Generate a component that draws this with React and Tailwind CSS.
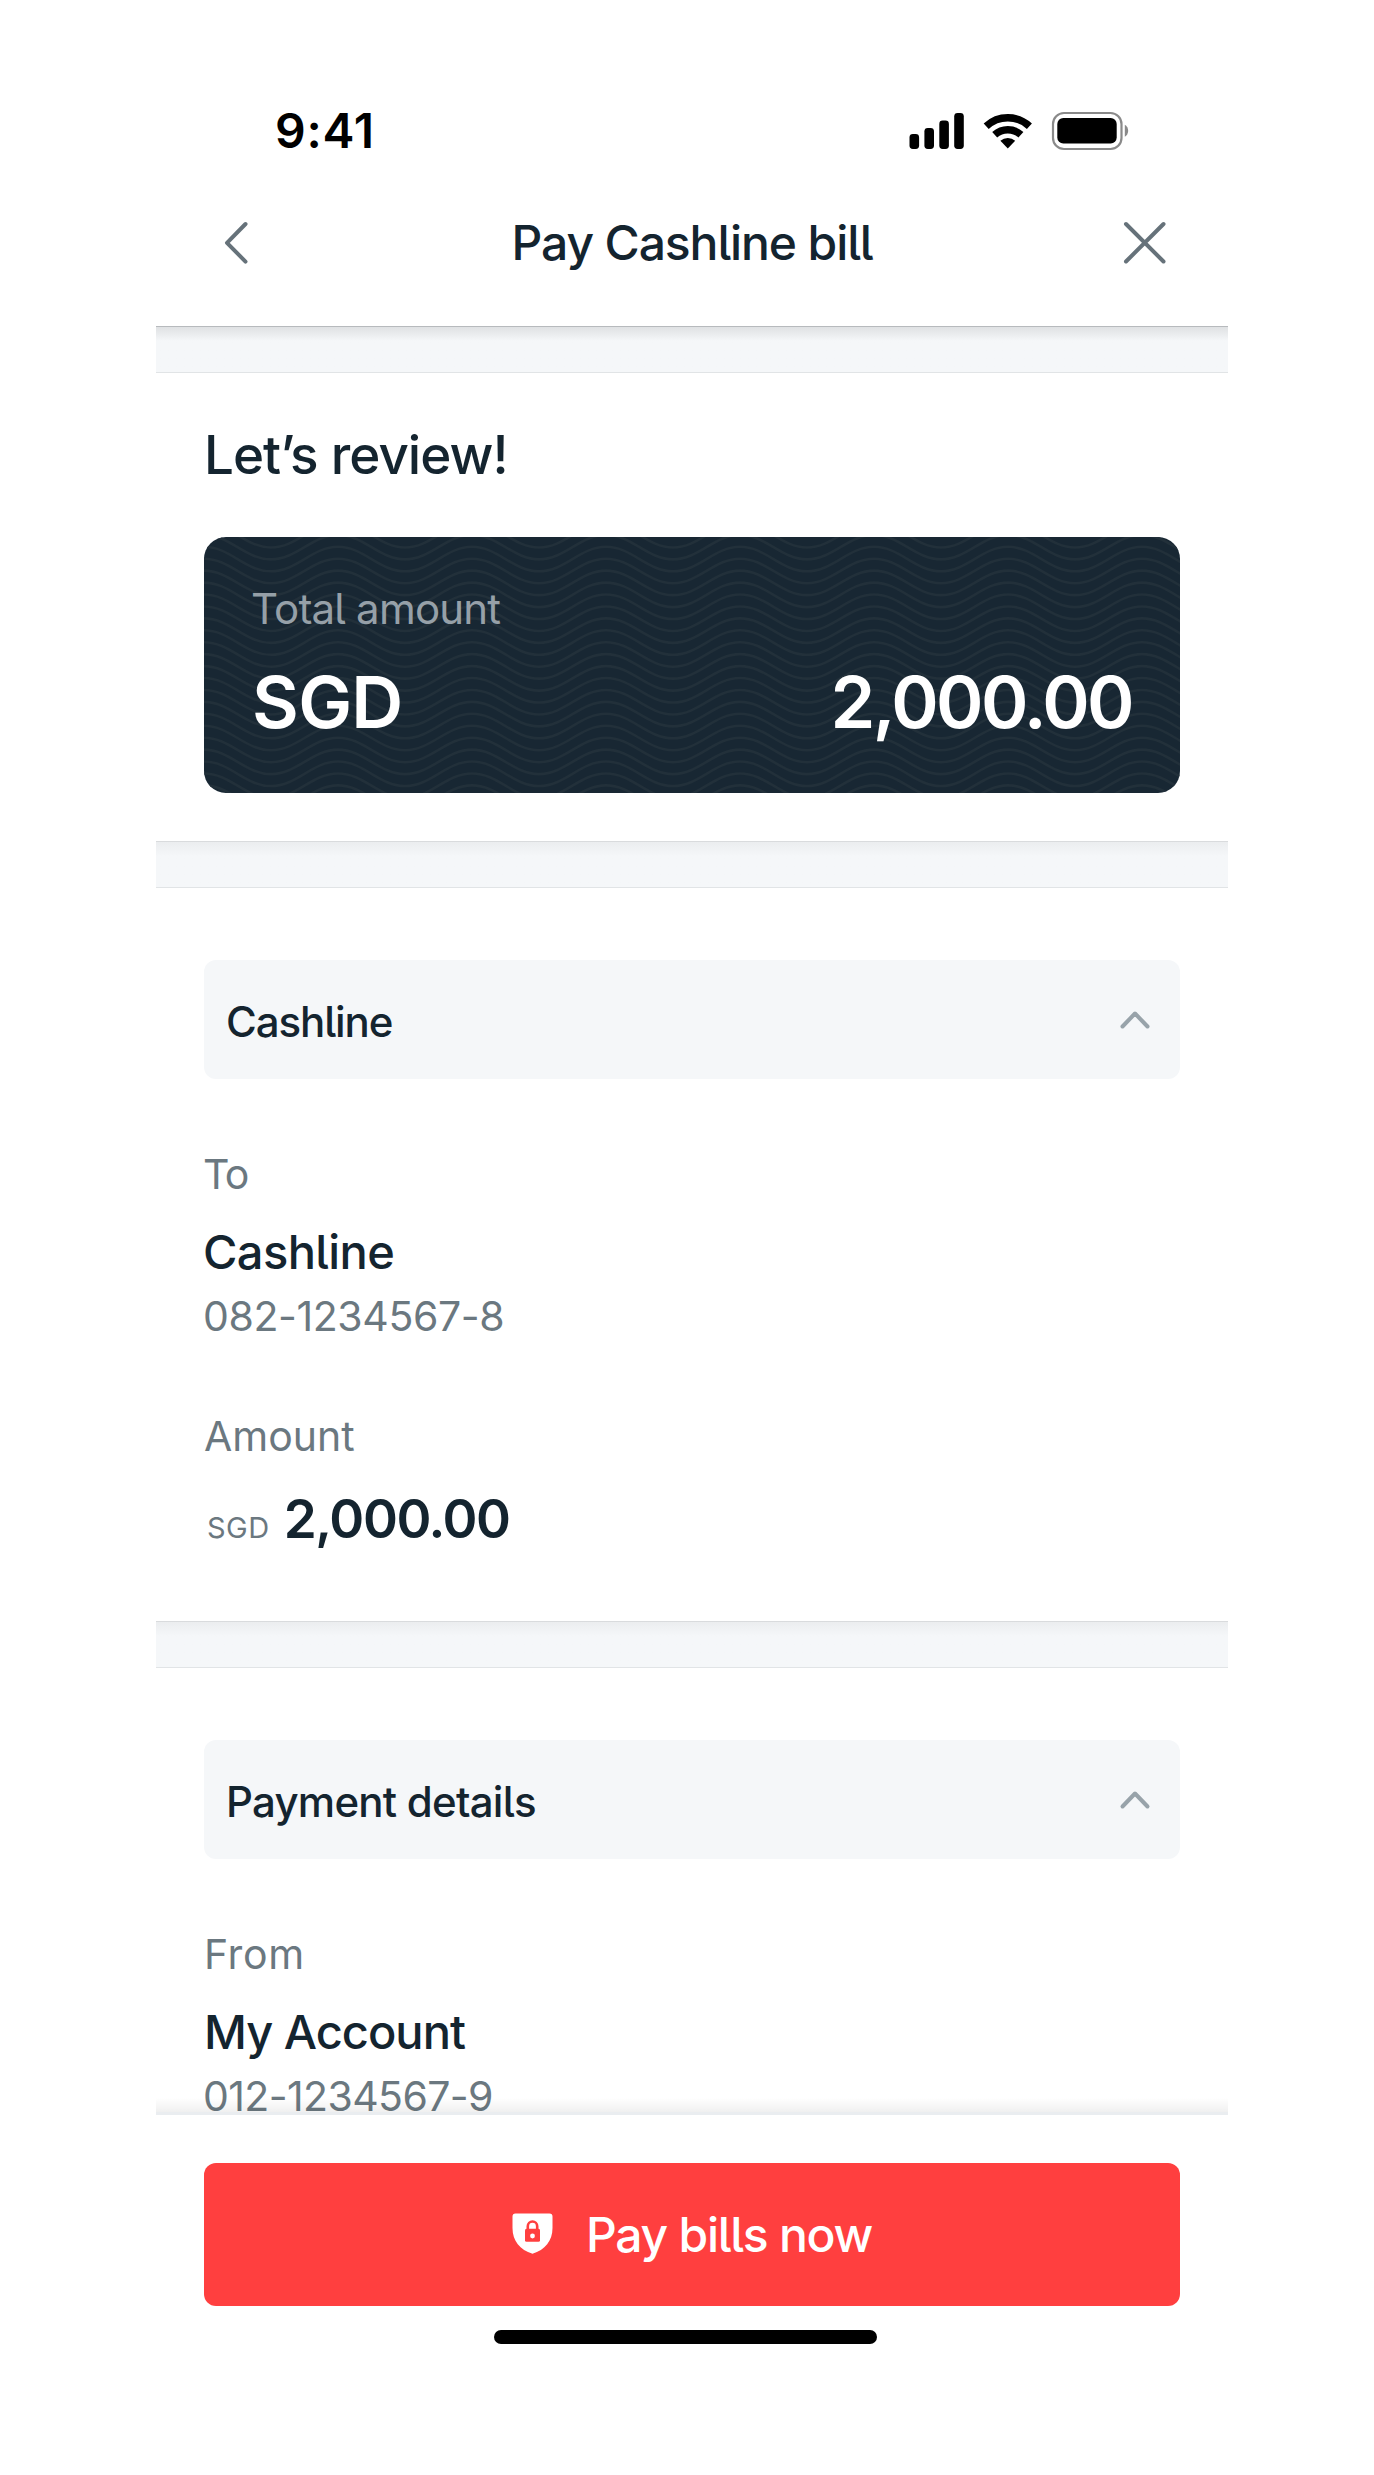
import React from "react";

// Wave lines behind the amount card: 134px period, 12px apart
const wave = (y) => {
  let d = `M-67 ${y + 24.5}`;
  for (let i = 0; i < 16; i++) {
    const x = -67 + i * 67;
    const from = i % 2 === 0 ? y + 24.5 : y;
    const to = i % 2 === 0 ? y : y + 24.5;
    d += ` C${x + 26} ${from} ${x + 41} ${to} ${x + 67} ${to}`;
  }
  return d;
};

const waveLines = Array.from({ length: 25 }, (_, i) => 9.8 + (i - 3) * 11.93);

const StatusBar = () => (
  <div className="flex h-[182px] items-start justify-between pt-[102px] pr-[99px] pl-[119px]">
    <span className="text-[48px] leading-[58px] font-semibold tracking-[0.8px] text-black">
      9:41
    </span>
    <svg width="221" height="44" viewBox="908 109 221 44" className="mt-[7px]">
      <rect x="909.5" y="134" width="9.6" height="15" rx="3.4" />
      <rect x="924.4" y="128" width="9.6" height="21" rx="3.4" />
      <rect x="939.3" y="120.5" width="9.6" height="28.5" rx="3.4" />
      <rect x="954.2" y="113" width="9.6" height="36" rx="3.4" />
      <g fill="none" stroke="#000" strokeWidth="7.4">
        <path d="M986.2 126.2a31.8 31.8 0 0 1 43.2 0" />
        <path d="M994.7 134.8a19.4 19.4 0 0 1 26.2 0" />
      </g>
      <path d="M1000.4 140.8a11.5 11.5 0 0 1 14.8 0l-7.4 7.8z" />
      <rect
        x="1053"
        y="113"
        width="68.5"
        height="36"
        rx="11"
        fill="none"
        stroke="#8a8a8a"
        strokeWidth="2.2"
      />
      <rect x="1057.3" y="118" width="59.4" height="25.5" rx="6" />
      <path d="M1124.8 124.7a7 7 0 0 1 0 12z" fill="#8a8a8a" />
    </svg>
  </div>
);

const Header = () => (
  <div className="flex h-[144px] items-center justify-between pr-[61px] pb-[22px] pl-[67px]">
    <svg
      width="28"
      height="44"
      viewBox="0 0 28 44"
      fill="none"
      stroke="#66727a"
      strokeWidth="4"
      strokeLinecap="round"
      strokeLinejoin="round"
    >
      <path d="M22.5 3 4 21.8l18.5 18.8" />
    </svg>
    <h1 className="pl-[10px] text-[48px] leading-[58px] font-medium tracking-[-1.1px] text-[#14242f]">
      Pay Cashline bill
    </h1>
    <svg
      width="44"
      height="44"
      viewBox="0 0 44 44"
      fill="none"
      stroke="#66727a"
      strokeWidth="4"
      strokeLinecap="round"
    >
      <path d="M3 3l37.5 37.5M40.5 3L3 40.5" />
    </svg>
  </div>
);

const Divider = ({ strong }) => (
  <div
    className={`h-[47px] border-t border-b border-b-[#e1e4e6] bg-linear-to-b to-[#f5f7f9] to-[14px] ${
      strong
        ? "border-t-[#b7babd] from-[#dfe1e3]"
        : "border-t-[#d9dbdd] from-[#ebedef]"
    }`}
  />
);

const Panel = ({ title, className }) => (
  <div className="flex h-[119px] items-center justify-between rounded-[12px] bg-[#f5f7f9] pr-[29px] pl-[22px]">
    <span
      className={`mt-[5px] text-[42px] leading-[52px] font-medium text-[#14242f] ${className}`}
    >
      {title}
    </span>
    <svg
      width="32"
      height="22"
      viewBox="0 0 32 22"
      fill="none"
      stroke="#98a3aa"
      strokeWidth="4"
      strokeLinecap="round"
      strokeLinejoin="round"
    >
      <path d="M3.5 17.5 16 4.5l12.5 13" />
    </svg>
  </div>
);

const ShieldIcon = () => (
  <svg width="41" height="41" viewBox="0 0 41 41" className="mb-[3px]">
    <path
      d="M3.5 .5h34a3 3 0 0 1 3 3V15C40.5 28 33 37 20.5 40.7 8 37 .5 28 .5 15V3.5a3 3 0 0 1 3-3z"
      fill="#fff"
    />
    <path
      d="M15.8 17v-3.8a4.7 4.7 0 0 1 9.4 0V17"
      fill="none"
      stroke="#ff3f3f"
      strokeWidth="2.6"
    />
    <rect x="13" y="15.8" width="15" height="13" rx="1.5" fill="#ff3f3f" />
    <circle cx="20.5" cy="23" r="2.4" fill="#fff" />
  </svg>
);

const App = () => {
  return (
    <div className="min-h-[2475px] bg-white font-['Inter',sans-serif] [font-feature-settings:'cv05']">
      <div className="ml-[156px] w-[1072px] bg-white">
        <StatusBar />
        <Header />

        {/* Scrollable content */}
        <main className="relative h-[1786px] overflow-hidden">
          <Divider strong />
          <section className="px-12 pt-[52px] pb-12">
            <h2 className="text-[53px] leading-[60px] font-medium tracking-[-1px] text-[#14242f]">
              Let’s review!
            </h2>
            <div className="relative mt-[52px] h-[256px] overflow-hidden rounded-[22px] bg-[#182733]">
              <svg
                className="absolute inset-0 h-full w-full"
                fill="none"
                stroke="#22303a"
                strokeWidth="2.6"
              >
                {waveLines.map((y) => (
                  <path key={y} d={wave(y)} />
                ))}
              </svg>
              <div className="relative px-[48px] pt-[46px] text-white">
                <p className="-ml-px text-[42px] leading-[52px] tracking-[-0.8px] text-[#96a0a8]">
                  Total amount
                </p>
                <div className="mt-[24px] flex items-center justify-between text-[72px] leading-[86px] font-semibold">
                  <span className="tracking-[-0.7px]">SGD</span>
                  <span className="tracking-[-2.6px]">2,000.00</span>
                </div>
              </div>
            </div>
          </section>

          <Divider />
          <section className="px-12 pt-[72px] pb-[71px]">
            <Panel title="Cashline" className="tracking-[-1.1px]" />
            <p className="mt-[70px] -ml-px text-[41px] leading-[51px] tracking-[-1.5px] text-[#6b7880]">
              To
            </p>
            <p className="mt-6 -ml-px text-[47px] leading-[56px] font-medium tracking-[-0.6px] text-[#14242f]">
              Cashline
            </p>
            <p className="mt-[11px] -ml-px text-[41px] leading-[51px] tracking-[-0.4px] text-[#6b7880]">
              082-1234567-8
            </p>
            <p className="mt-[69px] text-[41px] leading-[50px] text-[#6b7880]">
              Amount
            </p>
            <div className="mt-[27px] flex items-baseline gap-[14px] pl-[3px] text-[#14242f]">
              <span className="text-[29px] tracking-[0.5px] text-[#6b7880]">
                SGD
              </span>
              <span className="text-[53px] leading-[62px] font-semibold tracking-[-1.4px]">
                2,000.00
              </span>
            </div>
          </section>

          <Divider />
          <section className="px-12 pt-[72px]">
            <Panel title="Payment details" className="tracking-[-0.75px]" />
            <p className="mt-[70px] text-[41px] leading-[51px] tracking-[0.6px] text-[#6b7880]">
              From
            </p>
            <p className="mt-6 text-[47px] leading-[56px] font-medium tracking-[-1px] text-[#14242f]">
              My Account
            </p>
            <p className="mt-[11px] -ml-px text-[41px] leading-[51px] tracking-[-0.6px] text-[#6b7880]">
              012-1234567-9
            </p>
          </section>
          <div className="absolute inset-x-0 bottom-0 h-[14px] bg-linear-to-b from-black/0 to-black/6" />
        </main>

        {/* Footer */}
        <div className="border-t-[3px] border-[#eaedf0] px-12 pt-[48px]">
          <button className="flex h-[143px] w-full items-center justify-center gap-[33px] rounded-[12px] bg-[#ff3f3f] text-white">
            <ShieldIcon />
            <span className="text-[48px] leading-[58px] font-medium tracking-[-1.25px]">
              Pay bills now
            </span>
          </button>
          <div className="mt-[24px] ml-[290px] h-[14px] w-[383px] rounded-full bg-black" />
        </div>
      </div>
    </div>
  );
};

export default App;
